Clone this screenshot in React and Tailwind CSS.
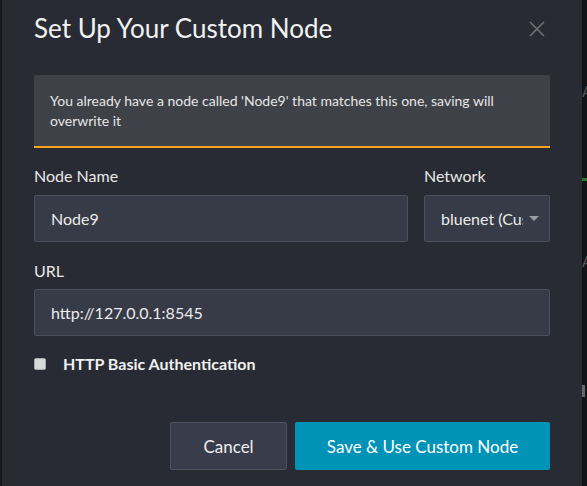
import React from "react";

export default function App() {
  return (
    <div
      className="w-[587px] h-[486px] overflow-hidden bg-[#131418] flex relative"
      style={{ fontFamily: "Lato, 'Open Sans', sans-serif" }}
    >
      <div className="w-[2px] bg-[#17181d]" />
      <div className="w-[580px] h-[486px] bg-[#282b33] px-8 flex flex-col">
        <div className="flex items-center justify-between mt-[12px] h-[32px]">
          <h1 className="text-[26px] leading-[32px] text-[#f2f2f2] font-normal">Set Up Your Custom Node</h1>
          <svg width="16" height="16" viewBox="0 0 16 16" className="mr-[5px] mt-[1px]">
            <path d="M1 1 L15 15 M15 1 L1 15" stroke="#6d7077" strokeWidth="1.6" />
          </svg>
        </div>
        <div className="mt-[31px] bg-[#3e4148] border-b-2 border-[#f7a21b] pt-[16px] pb-[15px] px-4 text-[14px] leading-[20px] text-[#e6e6e6]">
          You already have a node called 'Node9' that matches this one, saving will overwrite it
        </div>
        <div className="flex gap-4 mt-[18px]">
          <div className="w-[375px] flex flex-col">
            <label className="text-[16px] leading-[20px] text-[#e8e8e8]">Node Name</label>
            <div className="mt-[9px] h-[47px] bg-[#373a47] border border-[#4b4f5c] rounded-[2px] flex items-center px-4 text-[16px] text-[#ececec]">
              Node9
            </div>
          </div>
          <div className="flex-1 flex flex-col">
            <label className="text-[16px] leading-[20px] text-[#e8e8e8]">Network</label>
            <div className="mt-[9px] h-[47px] bg-[#373a47] border border-[#4b4f5c] rounded-[2px] flex items-center pl-4 pr-[10px] text-[16px] text-[#ececec]">
              <span className="w-[82px] overflow-hidden whitespace-nowrap">bluenet (Custom)</span>
              <svg width="10" height="5" viewBox="0 0 10 5" className="ml-[6px]">
                <path d="M0 0 L10 0 L5 5 Z" fill="#9a9ca3" />
              </svg>
            </div>
          </div>
        </div>
        <label className="mt-[19px] text-[16px] leading-[20px] text-[#e8e8e8]">URL</label>
        <div className="mt-[8px] h-[47px] bg-[#373a47] border border-[#4b4f5c] rounded-[2px] flex items-center px-4 text-[16px] text-[#ececec]">
          http://127.0.0.1:8545
        </div>
        <div className="flex items-center mt-[18px] h-[20px]">
          <div className="w-[12px] h-[12px] bg-[#d9d9d9] border border-[#a8a8a8] rounded-[2px]" />
          <span className="ml-[17px] text-[16px] font-bold text-[#f0f0f0]">HTTP Basic Authentication</span>
        </div>
        <div className="flex justify-end gap-2 mt-[48px]">
          <button className="w-[117px] h-[48px] bg-[#393d4b] border border-[#4d5160] rounded-[2px] text-[17px] text-[#eeeeee] pt-[2px]">
            Cancel
          </button>
          <button className="w-[255px] h-[48px] bg-[#0093b8] rounded-[2px] text-[17px] text-white pt-[2px]">
            Save &amp; Use Custom Node
          </button>
        </div>
      </div>
      <div className="flex-1 relative overflow-hidden">
        <span className="absolute left-[0px] top-[80px] text-[15px] text-[#555]">A</span>
        <div className="absolute left-0 top-[178px] w-[5px] h-[3px] bg-[#2a7a2a]" />
        <span className="absolute left-[0px] top-[250px] text-[15px] text-[#555]">A</span>
        <div className="absolute left-0 top-[385px] w-[3px] h-[12px] bg-[#666]" />
      </div>
    </div>
  );
}
